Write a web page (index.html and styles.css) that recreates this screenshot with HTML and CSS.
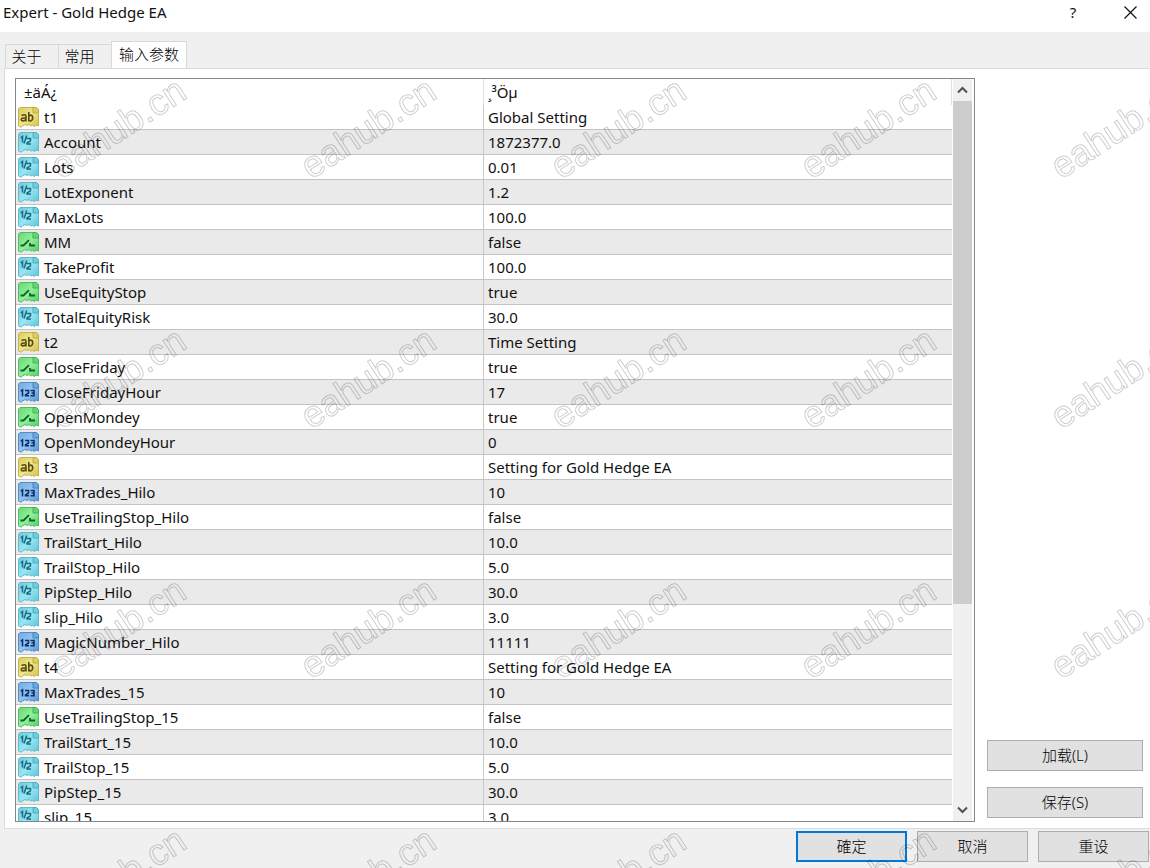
FILE: index.html
```
<!DOCTYPE html>
<html lang="zh-CN">
<head>
<meta charset="utf-8">
<title>Expert - Gold Hedge EA</title>
<link rel="stylesheet" href="styles.css">
</head>
<body>
<svg class="defs" aria-hidden="true">
  <defs>
    <linearGradient id="gy" x1="0" y1="0" x2="1" y2="1"><stop offset="0" stop-color="#dccb5c"/><stop offset="0.5" stop-color="#f0e68c"/><stop offset="1" stop-color="#d3bf4a"/></linearGradient>
    <linearGradient id="gc" x1="0" y1="0" x2="1" y2="1"><stop offset="0" stop-color="#6cc8da"/><stop offset="0.5" stop-color="#98e6f2"/><stop offset="1" stop-color="#5fc2d8"/></linearGradient>
    <linearGradient id="gg" x1="0" y1="0" x2="1" y2="1"><stop offset="0" stop-color="#66d872"/><stop offset="0.5" stop-color="#90f09a"/><stop offset="1" stop-color="#52cc66"/></linearGradient>
    <linearGradient id="gb" x1="0" y1="0" x2="1" y2="1"><stop offset="0" stop-color="#70ace0"/><stop offset="0.5" stop-color="#94c4f2"/><stop offset="1" stop-color="#5593d2"/></linearGradient>
    <path id="sheet" d="M2 .5H15L20.500 5.500V19L18 18 16.500 19.500 14.500 18.500 12.500 19 11 17.500 9 18.500 7 17.500 4.500 19 3 20.200 .5 19V2Z"/>
    <path id="fold" d="M15 .5H18.500L20.500 2.500V6H15Z"/>
    <symbol id="str" viewBox="0 0 21 21">
      <use href="#sheet" fill="url(#gy)" stroke="#c4b24a"/><use href="#fold" fill="#dccd62" stroke="#bfac42"/>
      <g fill="none" stroke="#574d12" stroke-width="1.600"><path d="M3.500 8.500Q8 6.500 8 9.500V14.500M8 10.800Q3 10.800 3.200 12.800Q4 15 8 12.800"/><path d="M10.800 5V14.500M10.800 9.500Q12 7.500 14 8.500Q15.500 11 14 13Q12 15 10.800 13"/></g>
    </symbol>
    <symbol id="dbl" viewBox="0 0 21 21">
      <use href="#sheet" fill="url(#gc)" stroke="#5fbccf"/><use href="#fold" fill="#70cddc" stroke="#48aec2"/>
      <g fill="none" stroke="#1b6c84" stroke-width="1.500"><path d="M2.800 5.800L4.500 4.500V10.500M8.700 3.500L6 11.500M8.500 6.500H12.500V8.800L9 11V12H13"/></g>
    </symbol>
    <symbol id="bool" viewBox="0 0 21 21">
      <use href="#sheet" fill="url(#gg)" stroke="#4fbf62"/><use href="#fold" fill="#66d675" stroke="#42b057"/>
      <path d="M2.500 13.500H5.500L11 8.200M12 11V13.500H17" fill="none" stroke="#12602b" stroke-width="1.800"/>
    </symbol>
    <symbol id="int" viewBox="0 0 21 21">
      <use href="#sheet" fill="url(#gb)" stroke="#528fcb"/><use href="#fold" fill="#6ca8e0" stroke="#4584c2"/>
      <path d="M2.800 9L4.500 8V14.500M7 8.500H10.500V11L7.500 13V13.800H11M12.500 8.500H16V13.800H12.500M13.500 11H16" fill="none" stroke="#0c2f68" stroke-width="1.600"/>
    </symbol>
  </defs>
</svg>

<header class="titlebar">
  <h1 class="title">Expert - Gold Hedge EA</h1>
  <button class="title-btn" type="button">?</button>
  <button class="title-btn" type="button" aria-label="Close"><svg width="13" height="13" viewBox="0 0 13 13"><path d="M.5 .5L12.500 12.500M12.500 .5L.5 12.500" stroke="#111" stroke-width="1.200" fill="none"/></svg></button>
</header>

<nav class="tabs" role="tablist">
  <button class="tab" type="button" role="tab" aria-selected="false">关于</button>
  <button class="tab" type="button" role="tab" aria-selected="false">常用</button>
  <button class="tab tab-active" type="button" role="tab" aria-selected="true">输入参数</button>
</nav>

<main class="panel">
  <section class="list">
    <div class="viewport">
      <table class="params">
        <thead><tr><th scope="col">±äÁ¿</th><th scope="col">¸³Öµ</th></tr></thead>
        <tbody>
          <tr><td><svg class="icon"><use href="#str"/></svg>t1</td><td>Global Setting</td></tr>
          <tr><td><svg class="icon"><use href="#dbl"/></svg>Account</td><td>1872377.0</td></tr>
          <tr><td><svg class="icon"><use href="#dbl"/></svg>Lots</td><td>0.01</td></tr>
          <tr><td><svg class="icon"><use href="#dbl"/></svg>LotExponent</td><td>1.2</td></tr>
          <tr><td><svg class="icon"><use href="#dbl"/></svg>MaxLots</td><td>100.0</td></tr>
          <tr><td><svg class="icon"><use href="#bool"/></svg>MM</td><td>false</td></tr>
          <tr><td><svg class="icon"><use href="#dbl"/></svg>TakeProfit</td><td>100.0</td></tr>
          <tr><td><svg class="icon"><use href="#bool"/></svg>UseEquityStop</td><td>true</td></tr>
          <tr><td><svg class="icon"><use href="#dbl"/></svg>TotalEquityRisk</td><td>30.0</td></tr>
          <tr><td><svg class="icon"><use href="#str"/></svg>t2</td><td>Time Setting</td></tr>
          <tr><td><svg class="icon"><use href="#bool"/></svg>CloseFriday</td><td>true</td></tr>
          <tr><td><svg class="icon"><use href="#int"/></svg>CloseFridayHour</td><td>17</td></tr>
          <tr><td><svg class="icon"><use href="#bool"/></svg>OpenMondey</td><td>true</td></tr>
          <tr><td><svg class="icon"><use href="#int"/></svg>OpenMondeyHour</td><td>0</td></tr>
          <tr><td><svg class="icon"><use href="#str"/></svg>t3</td><td>Setting for Gold Hedge EA</td></tr>
          <tr><td><svg class="icon"><use href="#int"/></svg>MaxTrades_Hilo</td><td>10</td></tr>
          <tr><td><svg class="icon"><use href="#bool"/></svg>UseTrailingStop_Hilo</td><td>false</td></tr>
          <tr><td><svg class="icon"><use href="#dbl"/></svg>TrailStart_Hilo</td><td>10.0</td></tr>
          <tr><td><svg class="icon"><use href="#dbl"/></svg>TrailStop_Hilo</td><td>5.0</td></tr>
          <tr><td><svg class="icon"><use href="#dbl"/></svg>PipStep_Hilo</td><td>30.0</td></tr>
          <tr><td><svg class="icon"><use href="#dbl"/></svg>slip_Hilo</td><td>3.0</td></tr>
          <tr><td><svg class="icon"><use href="#int"/></svg>MagicNumber_Hilo</td><td>11111</td></tr>
          <tr><td><svg class="icon"><use href="#str"/></svg>t4</td><td>Setting for Gold Hedge EA</td></tr>
          <tr><td><svg class="icon"><use href="#int"/></svg>MaxTrades_15</td><td>10</td></tr>
          <tr><td><svg class="icon"><use href="#bool"/></svg>UseTrailingStop_15</td><td>false</td></tr>
          <tr><td><svg class="icon"><use href="#dbl"/></svg>TrailStart_15</td><td>10.0</td></tr>
          <tr><td><svg class="icon"><use href="#dbl"/></svg>TrailStop_15</td><td>5.0</td></tr>
          <tr><td><svg class="icon"><use href="#dbl"/></svg>PipStep_15</td><td>30.0</td></tr>
          <tr><td><svg class="icon"><use href="#dbl"/></svg>slip_15</td><td>3.0</td></tr>
        </tbody>
      </table>
    </div>
    <div class="scrollbar">
      <button class="arrow" type="button" aria-label="Scroll up"><svg width="11" height="8" viewBox="0 0 11 8"><path d="M1 6.500L5.500 2L10 6.500" fill="none" stroke="#505050" stroke-width="2"/></svg></button>
      <div class="track"><div class="thumb"></div></div>
      <button class="arrow" type="button" aria-label="Scroll down"><svg width="11" height="8" viewBox="0 0 11 8"><path d="M1 1.500L5.500 6L10 1.500" fill="none" stroke="#505050" stroke-width="2"/></svg></button>
    </div>
  </section>
  <aside class="side">
    <button class="btn" type="button">加载(L)</button>
    <button class="btn" type="button">保存(S)</button>
  </aside>
</main>

<footer class="footer">
  <button class="btn btn-default" type="button">確定</button>
  <button class="btn" type="button">取消</button>
  <button class="btn" type="button">重设</button>
</footer>

<svg class="watermark" aria-hidden="true">
  <defs>
    <pattern id="mark" width="250" height="250" patternUnits="userSpaceOnUse">
      <text x="61" y="180" transform="rotate(-33 61 180)">eahub.cn</text>
    </pattern>
  </defs>
  <rect width="100%" height="100%" fill="url(#mark)"/>
</svg>
</body>
</html>
```
FILE: styles.css
```
* { box-sizing: border-box; }

body {
  margin: 0;
  height: 100vh;
  display: flex;
  flex-direction: column;
  position: relative;
  overflow: hidden;
  background: #f0f0f0;
  color: #111;
  font: 15px/24px "Noto Sans", "Noto Sans CJK SC", sans-serif;
}

button { font: inherit; color: inherit; margin: 0; padding: 0; }

.defs { position: absolute; width: 0; height: 0; }

.titlebar {
  display: flex;
  align-items: center;
  height: 32px;
  flex: none;
  padding: 0 0 8px 3px;
  background: #fff;
}
.title { flex: 1; margin: 0; font-size: 15px; font-weight: 400; }
.title-btn {
  width: 40px;
  margin-left: 17px;
  border: 0;
  background: none;
  display: flex;
  justify-content: center;
  align-items: center;
}

.tabs {
  display: flex;
  align-items: flex-end;
  flex: none;
  height: 36px;
  padding-left: 5px;
}
.tab {
  height: 24px;
  width: 53px;
  padding: 0 11px 2px 0;
  border: 1px solid #d9d9d9;
  border-bottom: 0;
  border-right: 0;
  background: #f0f0f0;
  color: #000;
  font-weight: 300;
  line-height: 20px;
}
.tab-active {
  height: 27px;
  width: 76px;
  padding: 0 0 2px;
  border-right: 1px solid #d9d9d9;
  background: #fff;
}

.panel {
  display: flex;
  flex: 1;
  min-height: 0;
  margin-left: 4px;
  padding: 9px 7px 6px 10px;
  gap: 12px;
  border: 1px solid #dcdcdc;
  border-right: 0;
  background: #fff;
}

.list {
  display: flex;
  flex: 1;
  min-width: 0;
  border: 1px solid #828790;
  background: #fff;
}
.viewport { flex: 1; min-width: 0; overflow: hidden; }

.params {
  width: 100%;
  table-layout: fixed;
  border-collapse: separate;
  border-spacing: 0;
}
.params th, .params td {
  height: 25px;
  padding: 0 4px;
  text-align: left;
  font-weight: 400;
  white-space: nowrap;
}
.params th { height: 26px; }
.params th:first-child { padding-left: 8px; border-right: 1px solid #e0e0e0; }
.params th:last-child { border-right: 1px solid #e0e0e0; }
.params td { border-bottom: 1px solid #c3c3c3; }
.params td:first-child { padding-left: 2px; border-right: 1px solid #c8c8c8; }
.params tbody tr:nth-child(even) { background: #eaeaea; }

.icon {
  width: 21px;
  height: 21px;
  margin: 2px 5px 0 0;
  vertical-align: top;
}

.scrollbar {
  display: flex;
  flex-direction: column;
  flex: none;
  width: 22px;
  padding: 0 2px 0 1px;
}
.arrow {
  display: flex;
  align-items: center;
  justify-content: center;
  height: 22px;
  border: 0;
  background: #f0f0f0;
}
.track { flex: 1; background: #f0f0f0; }
.thumb { height: 72%; background: #cdcdcd; }

.side {
  display: flex;
  flex-direction: column;
  justify-content: flex-end;
  flex: none;
  width: 156px;
  gap: 16px;
  padding-bottom: 4px;
}

.btn {
  height: 31px;
  padding-bottom: 2px;
  border: 1px solid #adadad;
  background: #e1e1e1;
  color: #000;
  font-weight: 300;
}
.footer {
  display: flex;
  justify-content: flex-end;
  flex: none;
  gap: 10px;
  height: 39px;
  padding: 2px 1px 6px 0;
}
.footer .btn { width: 111px; }
.footer .btn-default { border: 2px solid #0078d7; }

.watermark {
  position: absolute;
  inset: 0;
  width: 100%;
  height: 100%;
  pointer-events: none;
}
.watermark text {
  font: 37px "Liberation Sans", sans-serif;
  fill: none;
  stroke: rgba(0, 0, 0, 0.2);
  stroke-width: 1px;
}
```
